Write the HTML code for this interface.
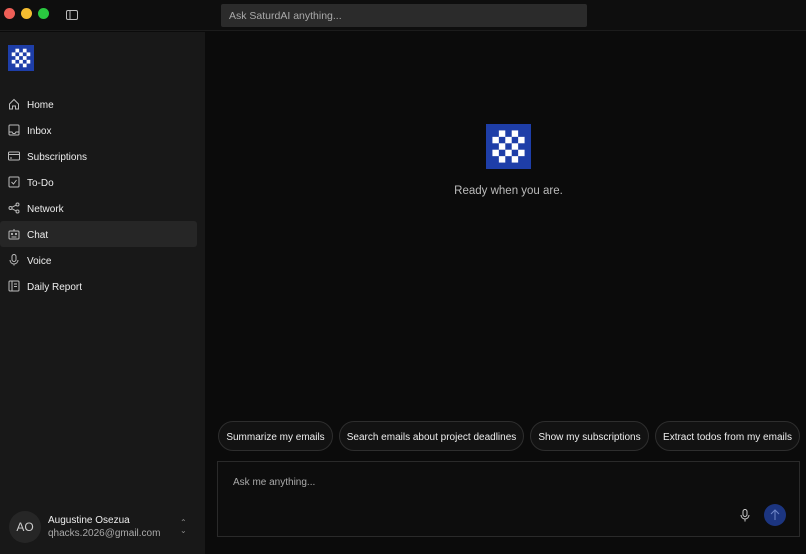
<!DOCTYPE html>
<html><head><style>
*{box-sizing:border-box;margin:0;padding:0}
body{width:806px;height:554px;background:#0b0b0b;font-family:"Liberation Sans",sans-serif;overflow:hidden;position:relative;color:#eee}
.top{position:absolute;left:0;top:0;width:806px;height:31px;background:#0e0e0e;border-bottom:1px solid #1c1c1c}
.dot{position:absolute;top:8px;width:11px;height:11px;border-radius:50%}
.search{position:absolute;left:221px;top:4px;width:366px;height:23px;background:#2b2b2b;border-radius:2px;color:#aaa;font-size:10.5px;line-height:23px;padding-left:8px}
.side{position:absolute;left:0;top:32px;width:205px;height:522px;background:#181818}
.logo{position:absolute;background:#1e3ea8}
.nav{position:absolute;left:0;width:197px;height:26px;font-size:10px;color:#eee;line-height:29px;padding-left:27px}
.nav svg{position:absolute;left:8px;top:7px}
.act{background:#262626;border-radius:3px}
.chip{position:absolute;top:421px;height:30px;border:1px solid #2e2e2e;background:#121212;border-radius:15px;font-size:10px;line-height:31px;text-align:center;white-space:nowrap;color:#eee}
.box{position:absolute;left:217px;top:461px;width:583px;height:76px;border:1px solid #2a2a2a;background:#0d0d0d}
</style></head><body>
<div class="top">
<div class="dot" style="left:4px;background:#ee5f57"></div>
<div class="dot" style="left:21px;background:#f5bd30"></div>
<div class="dot" style="left:38px;background:#2ac840"></div>
<svg style="position:absolute;left:66px;top:9px" width="12" height="12" viewBox="0 0 12 12"><rect x="0.5" y="1.5" width="11" height="9" rx="1.5" fill="none" stroke="#bbb"/><line x1="4" y1="2" x2="4" y2="10" stroke="#bbb"/></svg>
<div class="search" style="line-height:24px">Ask SaturdAI anything...</div>
</div>
<div class="side">
<div class="logo" style="left:8px;top:13px;width:26px;height:26px">
<svg width="26" height="26" viewBox="0 0 7 7"><g fill="#fff"><rect x="2" y="1" width="1" height="1"/><rect x="4" y="1" width="1" height="1"/><rect x="1" y="2" width="1" height="1"/><rect x="3" y="2" width="1" height="1"/><rect x="5" y="2" width="1" height="1"/><rect x="2" y="3" width="1" height="1"/><rect x="4" y="3" width="1" height="1"/><rect x="1" y="4" width="1" height="1"/><rect x="3" y="4" width="1" height="1"/><rect x="5" y="4" width="1" height="1"/><rect x="2" y="5" width="1" height="1"/><rect x="4" y="5" width="1" height="1"/></g></svg>
</div>
<div class="nav" style="top:59px"><svg width="12" height="12" viewBox="0 0 12 12" fill="none" stroke="#bbb"><path d="M1.5 6 6 1.5 10.5 6V11h-3V8h-3v3h-3z"/></svg>Home</div>
<div class="nav" style="top:85px"><svg width="12" height="12" viewBox="0 0 12 12" fill="none" stroke="#bbb"><rect x="1" y="1" width="10" height="10" rx="1"/><path d="M1 8h3l1 1.5h2L8 8h3"/></svg>Inbox</div>
<div class="nav" style="top:111px"><svg width="12" height="12" viewBox="0 0 12 12" fill="none" stroke="#bbb"><rect x="0.5" y="2" width="11" height="8" rx="1"/><path d="M0.5 4.5h11M2 8h2"/></svg>Subscriptions</div>
<div class="nav" style="top:137px"><svg width="12" height="12" viewBox="0 0 12 12" fill="none" stroke="#bbb"><rect x="1" y="1" width="10" height="10" rx="1"/><path d="M3.5 6l2 2 3-4"/></svg>To-Do</div>
<div class="nav" style="top:163px"><svg width="12" height="12" viewBox="0 0 12 12" fill="none" stroke="#bbb"><circle cx="2.5" cy="6" r="1.5"/><circle cx="9.5" cy="2.5" r="1.5"/><circle cx="9.5" cy="9.5" r="1.5"/><path d="M4 5.2 8 3.2M4 6.8l4 2"/></svg>Network</div>
<div class="nav act" style="top:189px"><svg width="12" height="12" viewBox="0 0 12 12" fill="none" stroke="#bbb"><rect x="1" y="3" width="10" height="8" rx="1"/><path d="M6 3V1M3.5 9h5"/><circle cx="4" cy="6" r=".6"/><circle cx="8" cy="6" r=".6"/></svg>Chat</div>
<div class="nav" style="top:215px"><svg width="12" height="12" viewBox="0 0 12 12" fill="none" stroke="#bbb"><rect x="4" y="0.5" width="4" height="7" rx="2"/><path d="M2 6a4 4 0 0 0 8 0M6 10v1.5"/></svg>Voice</div>
<div class="nav" style="top:241px"><svg width="12" height="12" viewBox="0 0 12 12" fill="none" stroke="#bbb"><rect x="1" y="1" width="10" height="10" rx="1"/><path d="M4 1v10M6 4h3M6 6.5h3"/></svg>Daily Report</div>
<div style="position:absolute;left:9px;top:479px;width:32px;height:32px;border-radius:50%;background:#262626;color:#ccc;font-size:12px;line-height:32px;text-align:center">AO</div>
<div style="position:absolute;left:48px;top:483px;font-size:10px;color:#eee">Augustine Osezua</div>
<div style="position:absolute;left:48px;top:496px;font-size:10px;color:#aaa">qhacks.2026@gmail.com</div>
<div style="position:absolute;left:180px;top:487px;font-size:8px;color:#888;line-height:8px">&#8963;<br>&#8964;</div>
</div>
<div class="logo" style="left:486px;top:124px;width:45px;height:45px">
<svg width="45" height="45" viewBox="0 0 7 7"><g fill="#fff"><rect x="2" y="1" width="1" height="1"/><rect x="4" y="1" width="1" height="1"/><rect x="1" y="2" width="1" height="1"/><rect x="3" y="2" width="1" height="1"/><rect x="5" y="2" width="1" height="1"/><rect x="2" y="3" width="1" height="1"/><rect x="4" y="3" width="1" height="1"/><rect x="1" y="4" width="1" height="1"/><rect x="3" y="4" width="1" height="1"/><rect x="5" y="4" width="1" height="1"/><rect x="2" y="5" width="1" height="1"/><rect x="4" y="5" width="1" height="1"/></g></svg>
</div>
<div style="position:absolute;left:408px;top:185px;width:201px;text-align:center;font-size:11.5px;color:#bbb">Ready when you are.</div>
<div class="chip" style="left:218px;width:115px">Summarize my emails</div>
<div class="chip" style="left:339px;width:185px">Search emails about project deadlines</div>
<div class="chip" style="left:530px;width:119px">Show my subscriptions</div>
<div class="chip" style="left:655px;width:145px">Extract todos from my emails</div>
<div class="box">
<div style="position:absolute;left:15px;top:15px;font-size:10px;color:#aaa">Ask me anything...</div>
<svg style="position:absolute;left:522px;top:47px" width="10" height="13" viewBox="0 0 10 13" fill="none" stroke="#ccc"><rect x="3" y="0.5" width="4" height="7" rx="2"/><path d="M1 6a4 4 0 0 0 8 0M5 10v2.5"/></svg>
<div style="position:absolute;left:546px;top:42px;width:22px;height:22px;border-radius:50%;background:#1c3580"><svg width="22" height="22" viewBox="0 0 22 22" fill="none" stroke="#6f86c8"><path d="M11 16V6M7 10l4-4 4 4"/></svg></div>
</div>
</body></html>
